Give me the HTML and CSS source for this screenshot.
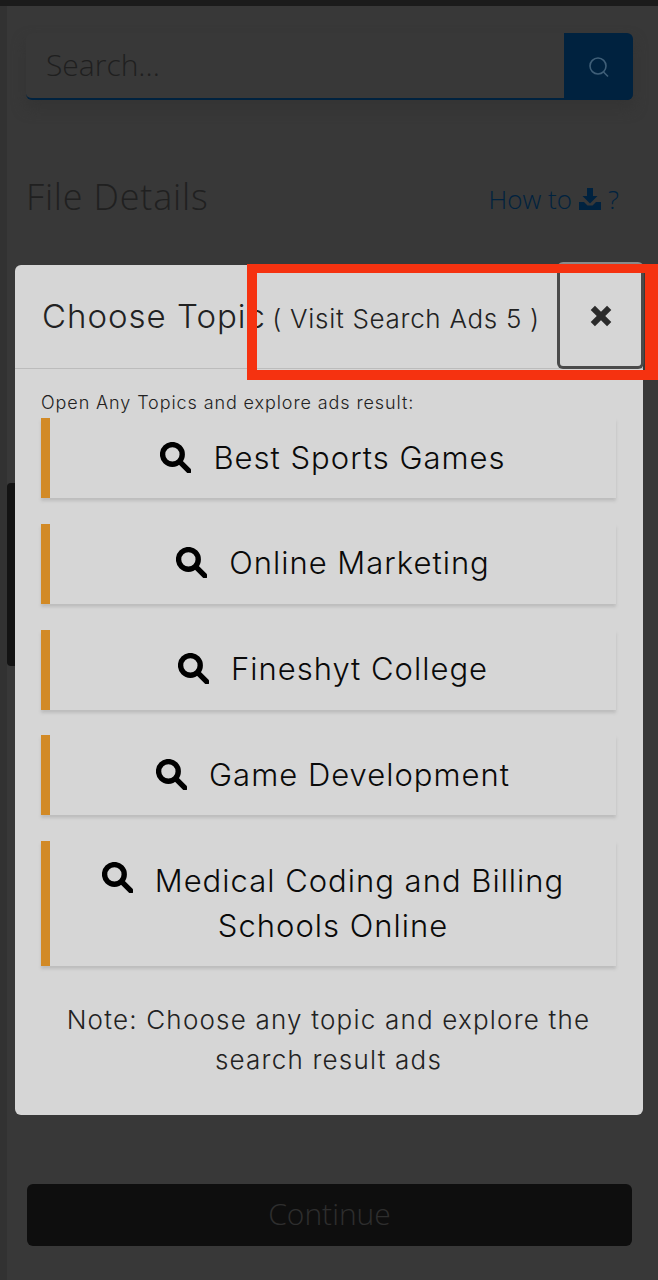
FILE: index.html
```html
<!doctype html>
<html lang="en">
<head>
	<meta charset="UTF-8">
	<title>File Details</title>
	<link rel="stylesheet" href="styles.css">
</head>
<body>
	<div class="topbar"></div>
	<div class="page">
		<div class="search">
			<div class="search_input">Search...</div>
			<div class="search_btn">
				<svg width="26" height="26" viewBox="0 0 26 26" fill="none" stroke="#3f5f78" stroke-width="1.6"><circle cx="12" cy="12" r="8"/><path d="M17.5 18l4.5 4.5"/></svg>
			</div>
		</div>
		<div class="details">
			<h2>File Details</h2>
			<span class="howto">How to
				<svg width="24" height="24" viewBox="0 0 22 24" fill="#00223f"><path d="M8 1h6v8h4.5L11 16.500 3.500 9H8z"/><path d="M0 15h5l3.500 3.500h5L17 15h5v8H0z"/></svg>
			?</span>
		</div>
		<div class="thumb"></div>
		<button class="continue">Continue</button>
	</div>

	<div class="modal">
		<header class="modal_head">
			<div class="modal_title">Choose Topic <small>( Visit Search Ads 5 )</small></div>
			<button class="close">
				<svg width="24" height="24" viewBox="0 0 22 22" stroke="#2b2b2b" stroke-width="5.500"><path d="M3.500 3.500l15 15M18.500 3.500l-15 15"/></svg>
			</button>
		</header>
		<section class="modal_body">
			<p class="lead">Open Any Topics and explore ads result:</p>
			<a class="topic">
				<svg class="glass" viewBox="0 0 30 30"><circle cx="12" cy="12" r="9.500"/><path d="M19 19l9 9"/></svg>
				<span>Best Sports Games</span>
			</a>
			<a class="topic">
				<svg class="glass" viewBox="0 0 30 30"><circle cx="12" cy="12" r="9.500"/><path d="M19 19l9 9"/></svg>
				<span>Online Marketing</span>
			</a>
			<a class="topic">
				<svg class="glass" viewBox="0 0 30 30"><circle cx="12" cy="12" r="9.500"/><path d="M19 19l9 9"/></svg>
				<span>Fineshyt College</span>
			</a>
			<a class="topic">
				<svg class="glass" viewBox="0 0 30 30"><circle cx="12" cy="12" r="9.500"/><path d="M19 19l9 9"/></svg>
				<span>Game Development</span>
			</a>
			<a class="topic tall">
				<span class="two_lines"><svg class="glass" viewBox="0 0 30 30"><circle cx="12" cy="12" r="9.500"/><path d="M19 19l9 9"/></svg>Medical Coding and Billing<br>Schools Online</span>
			</a>
			<p class="note">Note: Choose any topic and explore the search result ads</p>
		</section>
	</div>

	<div class="marker"></div>
</body>
</html>
```

FILE: styles.css
```css
*{
	padding: 0;
	margin: 0;
	box-sizing: border-box;
}
html,body{
	width: 658px;
	height: 1280px;
	overflow: hidden;
}
body{
	position: relative;
	background: #383838;
	box-shadow: inset 7px 0 0 #323232;
	font-family: "Inter", "Liberation Sans", sans-serif;
}
.topbar{
	height: 6px;
	background: #1b1b1b;
}
.page{
	padding: 27px 25px 0 26px;
}
.search{
	display: flex;
	height: 67px;
	border-radius: 6px;
	border-bottom: 2px solid #00223f;
	box-shadow: 0 8px 14px #343434;
}
.search_input{
	flex: 1;
	padding: 0 20px;
	line-height: 63px;
	font-family: "Open Sans", sans-serif;
	font-size: 30px;
	font-weight: 300;
	color: #1f1f1f;
}
.search_btn{
	width: 69px;
	margin-bottom: -2px;
	background: #00223f;
	border-radius: 0 6px 6px 0;
	display: flex;
	align-items: center;
	justify-content: center;
}
.details{
	display: flex;
	justify-content: space-between;
	align-items: center;
	margin-top: 72px;
	padding-right: 14px;
}
.details h2{
	font-family: "Open Sans", sans-serif;
	font-size: 36px;
	font-weight: 300;
	letter-spacing: .8px;
	color: #202020;
}
.howto{
	font-family: "Open Sans", sans-serif;
	font-size: 26px;
	font-weight: 300;
	color: #00223f;
	display: flex;
	align-items: center;
	gap: 6px;
	margin-top: 4px;
}
.thumb{
	position: absolute;
	left: 7px;
	top: 483px;
	width: 630px;
	height: 183px;
	background: #131313;
	border-radius: 4px;
}
.continue{
	position: absolute;
	left: 27px;
	top: 1184px;
	width: 605px;
	height: 62px;
	padding-bottom: 3px;
	border: 0;
	border-radius: 6px;
	background: #0e0e0e;
	color: #2e2e2e;
	font-family: "Open Sans", sans-serif;
	font-size: 30px;
	font-weight: 300;
}

.modal{
	position: absolute;
	left: 15px;
	top: 265px;
	width: 628px;
	height: 850px;
	background: #d6d6d6;
	border-radius: 6px;
}
.modal_head{
	display: flex;
	justify-content: space-between;
	height: 104px;
	padding-left: 27px;
	border-bottom: 1px solid #bcbcbc;
}
.modal_title{
	font-size: 33px;
	font-weight: 300;
	letter-spacing: 1px;
	line-height: 102px;
	color: #222;
	white-space: nowrap;
}
.modal_title small{
	font-size: 26px;
	letter-spacing: .7px;
	margin-left: -4px;
}
.close{
	width: 87px;
	height: 107px;
	margin-top: -3px;
	margin-right: -1px;
	background: #d6d6d6;
	border: 3px solid #4a4a4a;
	border-top-color: #8a8a8a;
	border-radius: 6px;
	display: flex;
	align-items: center;
	justify-content: center;
}
.modal_body{
	padding: 22px 27px 0 26px;
}
.lead{
	font-size: 18px;
	font-weight: 300;
	letter-spacing: .9px;
	line-height: 24px;
	color: #222;
}
.topic{
	display: flex;
	align-items: center;
	justify-content: center;
	gap: 22px;
	height: 80px;
	padding-bottom: 2px;
	margin-bottom: 25.750px;
	border-left: 9px solid #d28a26;
	box-shadow: 0 3px 3px #bdbdbd;
	font-size: 31px;
	font-weight: 300;
	letter-spacing: 1px;
	color: #0a0a0a;
}
.lead + .topic{
	margin-top: 3px;
}
.topic.tall{
	height: 125px;
	margin-bottom: 0;
	text-align: center;
	line-height: 45px;
}
.glass{
	width: 31px;
	height: 31px;
	fill: none;
	stroke: #000;
	stroke-width: 5.200;
	stroke-linecap: round;
	flex: none;
}
.two_lines .glass{
	vertical-align: -1px;
	margin-right: 22px;
}
.note{
	margin-top: 34px;
	text-align: center;
	font-size: 26px;
	font-weight: 300;
	letter-spacing: 1.200px;
	line-height: 40px;
	color: #222;
}

.marker{
	position: absolute;
	left: 247px;
	top: 264px;
	width: 411px;
	height: 116px;
	border-style: solid;
	border-color: #f53210;
	border-width: 9px 13px 10px 10px;
}
```
